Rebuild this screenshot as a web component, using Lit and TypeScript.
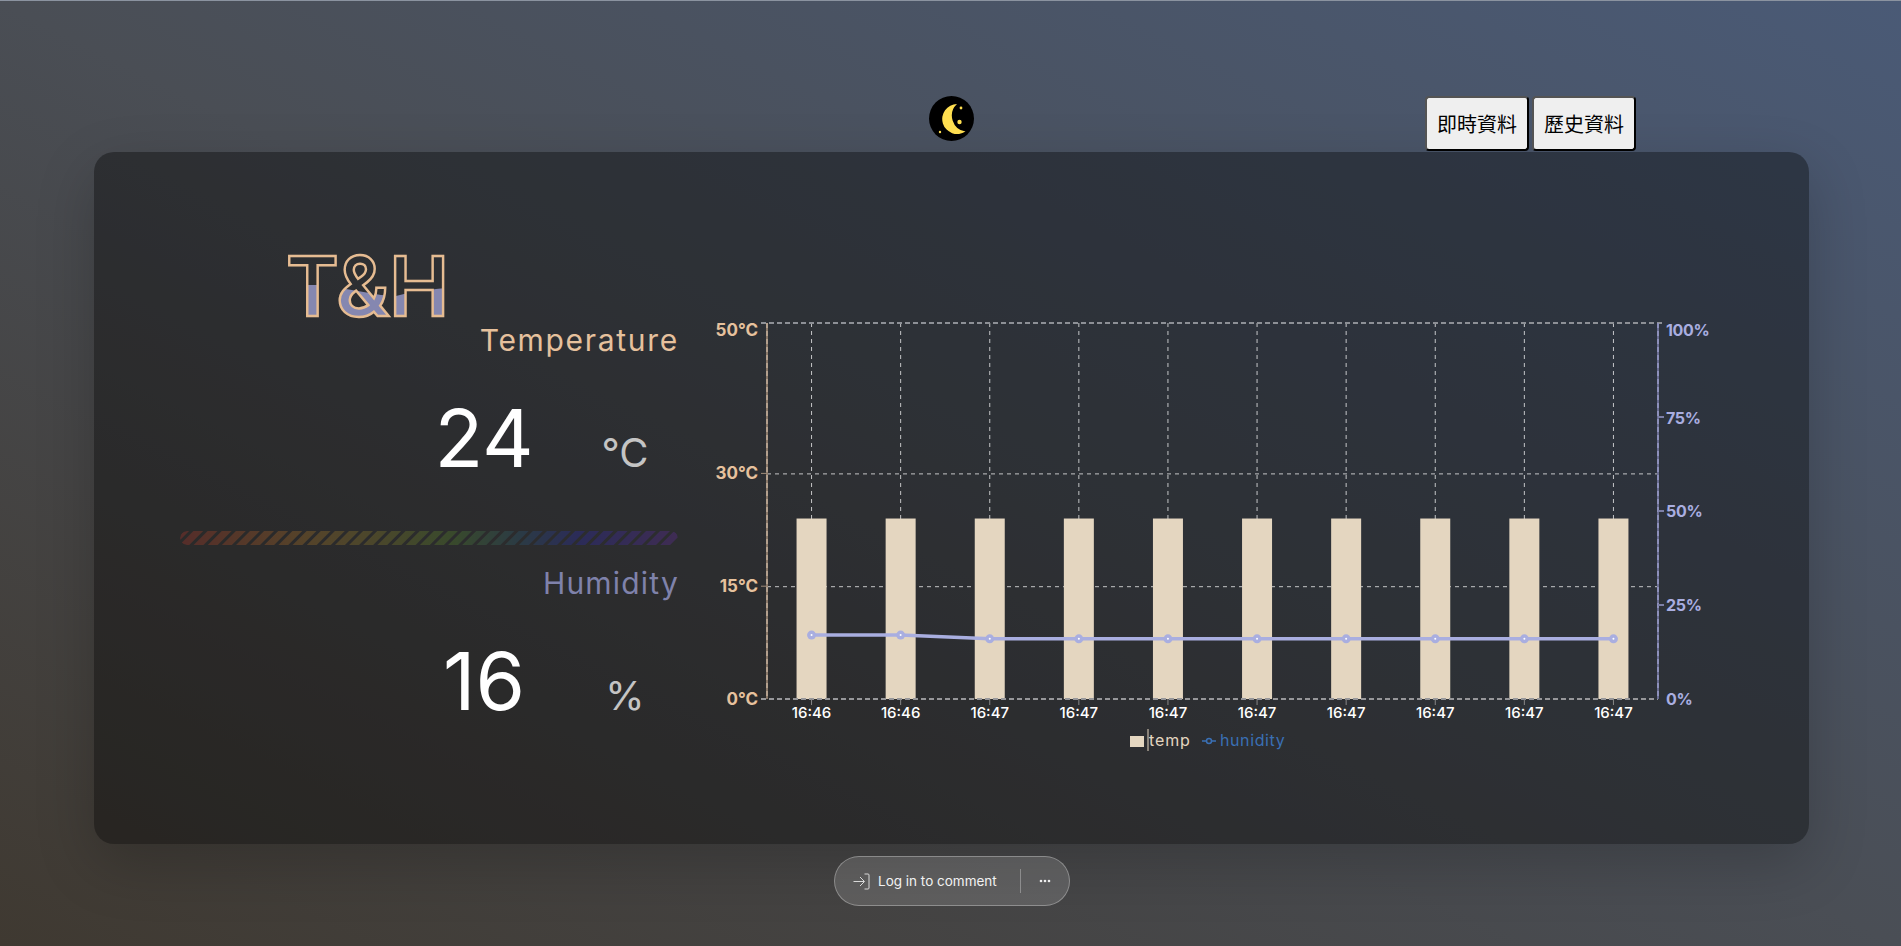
import { LitElement, html, css, svg } from "lit";
import { customElement } from "lit/decorators.js";

const X0 = 60, PW = 891, PH = 376, Y0 = 12; // plot origin inside the chart svg
const step = PW / 10;
const cats = ["16:46","16:46","16:47","16:47","16:47","16:47","16:47","16:47","16:47","16:47"];
const hum = [17,17,16,16,16,16,16,16,16,16];
const cx = (i: number) => X0 + step * (i + 0.5);
const yT = (v: number) => Y0 + PH - v * PH / 50;
const yH = (v: number) => Y0 + PH - v * PH / 100;

@customElement("app-root")
export class AppRoot extends LitElement {
  static styles = css`
    :host { display: block; box-sizing: border-box; padding-top: 96px; height: 946px; overflow: hidden;
      background: linear-gradient(to right top, #3f3931 0%, #4a4e55 50%, #4a5a76 100%);
      border-top: 1px solid #8b93a0; font-family: Inter, "Noto Sans", sans-serif; }
    .head { display: grid; grid-template-columns: 1fr 45px 1fr; padding-left: 2px; align-items: start; height: 56px; margin-top: -1px; }
    .moon { display: block; }
    .btns { justify-self: end; display: flex; gap: 3px; margin-right: 265px; }
    button { font: 20px "Noto Sans CJK TC", sans-serif; color: #000; background: #efefef;
      border: 2px outset #000; border-radius: 4px; padding: 0 10px; height: 55px; width: 104px; white-space: nowrap; }
    .card { box-sizing: border-box; margin: 0 92px 0 94px; height: 692px; border-radius: 20px;
      background: rgba(0,0,0,.38); box-shadow: 0 20px 60px rgba(0,0,0,.2);
      display: flex; align-items: flex-start; padding: 104px 0 0 86px; }
    .left { width: 498px; flex: none; display: flex; flex-direction: column; }
    .title { display: block; margin: -8px 0 0 106px; }
    .title text { font: 600 83px Inter, sans-serif; }
    .label { text-align: right; font-size: 30px; line-height: 36px; height: 36px; }
    .t { color: #e6c19d; margin-top: -10px; letter-spacing: 1.7px; margin-right: -1px; }
    .h { color: #7f82ab; margin-top: 20px; letter-spacing: 1.2px; margin-right: -1px; }
    .vals { display: grid; grid-template-columns: 176px 106px; justify-content: end; align-items: baseline; height: 96px; }
    .v1 { margin-top: 32px; }
    .v2 { margin-top: 32px; }
    .num { text-align: center; color: #fff; font-size: 80px; line-height: 96px; }
    .unit { text-align: center; color: #c4c4c4; font-size: 40px; }
    .bar { height: 14px; border-radius: 7px; margin-top: 45px; opacity: .2;
      background: linear-gradient(90deg, #ff3b2a 0%, #ffa726 25%, #c7b52b 40%, #6fbf2b 55%, #2b78a0 68%, #2a2aff 80%, #8a2be2 100%);
      -webkit-mask-image: repeating-linear-gradient(135deg, #000 0 6px, transparent 7px 9px, #000 10px);
      mask-image: repeating-linear-gradient(135deg, #000 0 6px, transparent 7px 9px, #000 10px); }
    .chart { display: block; margin: 55px 0 0 29px; flex: none; }
    .chart text { font-family: Inter, sans-serif; }
    .yl { font-size: 17px; font-weight: 700; fill: #e6c19d; }
    .yr { font-size: 16px; font-weight: 700; letter-spacing: -.3px; fill: #a9aee0; }
    .xl { font-size: 15px; font-weight: 500; fill: #fff; }
    .lt { font-size: 16px; letter-spacing: .6px; }
    .lt1 { letter-spacing: .9px; }
    .pill { box-sizing: border-box; width: 236px; height: 50px; margin: 12px 0 0 834px; border-radius: 25px;
      background: rgba(255,255,255,.14); border: 1px solid rgba(255,255,255,.3);
      display: flex; align-items: center; padding-left: 18px; color: #f2f2f2; font-size: 13.5px; }
    .pill svg { flex: none; }
    .txt { margin-left: 8px; width: 142px; white-space: nowrap; }
    .div { width: 1px; height: 24px; background: rgba(255,255,255,.3); }
    .dots { margin-left: 18px; }
  `;

  chart() {
    const top = Y0, bot = Y0 + PH, r = X0 + PW;
    const grid = "rgba(255,255,255,.72)";
    const lineD = hum.map((v, i) => `${i ? "L" : "M"}${cx(i)} ${yH(v)}`).join(" ");
    return html`<svg class="chart" width="1010" height="440" viewBox="0 0 1010 440">
      ${svg`
      ${cats.map((_, i) => svg`<line x1=${cx(i)} x2=${cx(i)} y1=${top} y2=${bot} stroke=${grid} stroke-dasharray="4 4"/>`)}
      ${[30, 15].map(v => svg`<line x1=${X0} x2=${r} y1=${yT(v) + .5} y2=${yT(v) + .5} stroke=${grid} stroke-dasharray="4 4"/>`)}
      ${cats.map((_, i) => svg`<rect x=${cx(i) - 15} y=${yT(24)} width="30" height=${bot - yT(24)} fill="#e4d6c0"/>`)}
      <line x1=${X0 - 6} x2=${r + 6} y1=${top} y2=${top} stroke="#8d9096" stroke-width="2" stroke-dasharray="5 3"/>
      <line x1=${X0 - 6} x2=${r} y1=${bot} y2=${bot} stroke="#97979a" stroke-width="2" stroke-dasharray="5 3"/>
      <line x1=${X0} x2=${X0} y1=${top} y2=${bot} stroke="#8c7a6a" stroke-width="2"/>
      <line x1=${X0} x2=${X0} y1=${top} y2=${bot} stroke="#b3a08e" stroke-width="2" stroke-dasharray="5 3"/>
      <line x1=${r} x2=${r} y1=${top} y2=${bot} stroke="#6c6f95" stroke-width="2"/>
      <line x1=${r} x2=${r} y1=${top} y2=${bot} stroke="#8d90bb" stroke-width="2" stroke-dasharray="5 3"/>
      ${[75, 50, 25].map(v => svg`<line x1=${r} x2=${r + 6} y1=${yH(v)} y2=${yH(v)} stroke="#7d80a8" stroke-width="2"/>`)}
      ${[30, 15].map(v => svg`<line x1=${X0 - 6} x2=${X0} y1=${yT(v)} y2=${yT(v)} stroke="#a08c7a" stroke-width="1"/>`)}
      ${cats.map((_, i) => svg`<line x1=${cx(i)} x2=${cx(i)} y1=${bot} y2=${bot + 6} stroke="#888"/>`)}
      <path d=${lineD} fill="none" stroke="#a9aee0" stroke-width="3.5"/>
      ${hum.map((v, i) => svg`<circle cx=${cx(i)} cy=${yH(v)} r="4.5" fill="#a9aee0"/><circle cx=${cx(i)} cy=${yH(v)} r="1" fill="#fff"/>`)}
      ${[[50, top + 7], [30, yT(30)], [15, yT(15)], [0, bot]].map(([v, y]) => svg`<text class="yl" x=${X0 - 9} y=${y + 6} text-anchor="end">${v}°C</text>`)}
      ${[[100, top + 7], [75, yH(75) + 1], [50, yH(50)], [25, yH(25)], [0, bot]].map(([v, y]) => svg`<text class="yr" x=${r + 8} y=${y + 6}>${v}%</text>`)}
      ${cats.map((c, i) => svg`<text class="xl" x=${cx(i)} y=${bot + 19} text-anchor="middle">${c}</text>`)}
      <rect x=${X0 + 363} y=${bot + 37} width="14" height="11" fill="#e4d6c0"/>
      <line x1=${X0 + 381} x2=${X0 + 381} y1=${bot + 30} y2=${bot + 53} stroke="#e4d6c0"/>
      <text class="lt lt1" x=${X0 + 382} y=${bot + 47} fill="#e4d6c0">temp</text>
      <line x1=${X0 + 435} x2=${X0 + 449} y1=${bot + 42} y2=${bot + 42} stroke="#3a70b5" stroke-width="1.5"/>
      <circle cx=${X0 + 442} cy=${bot + 42} r="2.5" fill="#2d3035" stroke="#3a70b5" stroke-width="1.5"/>
      <text class="lt" x=${X0 + 453} y=${bot + 47} fill="#3a70b5">hunidity</text>
      `}
    </svg>`;
  }

  render() {
    return html`
      <div class="head">
        <span></span>
        <svg class="moon" width="45" height="45" viewBox="0 0 45 45">
          <circle cx="22.5" cy="22.5" r="22.5" fill="#000"/>
          <path d="M28 8 A15 15 0 1 0 36.5 35.5 A16 16 0 0 1 28 8Z" fill="#ffdf50"/>
          <circle cx="32" cy="12" r="1.4" fill="#ffdf50"/>
          <circle cx="30.5" cy="26" r="2.2" fill="#ffdf50"/>
          <circle cx="11" cy="36" r="1.2" fill="#ffdf50"/>
        </svg>
        <div class="btns"><button>即時資料</button><button>歷史資料</button></div>
      </div>
      <div class="card">
        <div class="left">
          <svg class="title" width="180" height="84" viewBox="0 0 180 84">
            <defs>
              <pattern id="wave" patternUnits="userSpaceOnUse" width="180" height="84">
                <path d="M0 37 L45 37 L60 41 L95 47 L110 48 L118 46 L150 41 L180 38 V84 H0Z" fill="#8587b0"/>
              </pattern>
            </defs>
            <text x="0" y="68" textLength="163" lengthAdjust="spacingAndGlyphs" fill="url(#wave)" stroke="#e6bc92" stroke-width="2.5">T&amp;H</text>
          </svg>
          <div class="label t">Temperature</div>
          <div class="vals v1"><div class="num">24</div><div class="unit">°C</div></div>
          <div class="bar"></div>
          <div class="label h">Humidity</div>
          <div class="vals v2"><div class="num">16</div><div class="unit">%</div></div>
        </div>
        ${this.chart()}
      </div>
      <div class="pill">
        <svg width="17" height="17" viewBox="0 0 17 17" fill="none" stroke="#d8d8d8" stroke-width="1">
          <path d="M.5 8.5 H11 M7 4 L11.5 8.5 L7 13"/><path d="M11.5 1 H15 Q16 1 16 2 V15 Q16 16 15 16 H11.5"/>
        </svg>
        <span class="txt">Log in to comment</span>
        <span class="div"></span>
        <svg class="dots" width="12" height="4" viewBox="0 0 12 4" fill="#eee"><circle cx="2" cy="2" r="1.3"/><circle cx="6" cy="2" r="1.3"/><circle cx="10" cy="2" r="1.3"/></svg>
      </div>`;
  }
}
